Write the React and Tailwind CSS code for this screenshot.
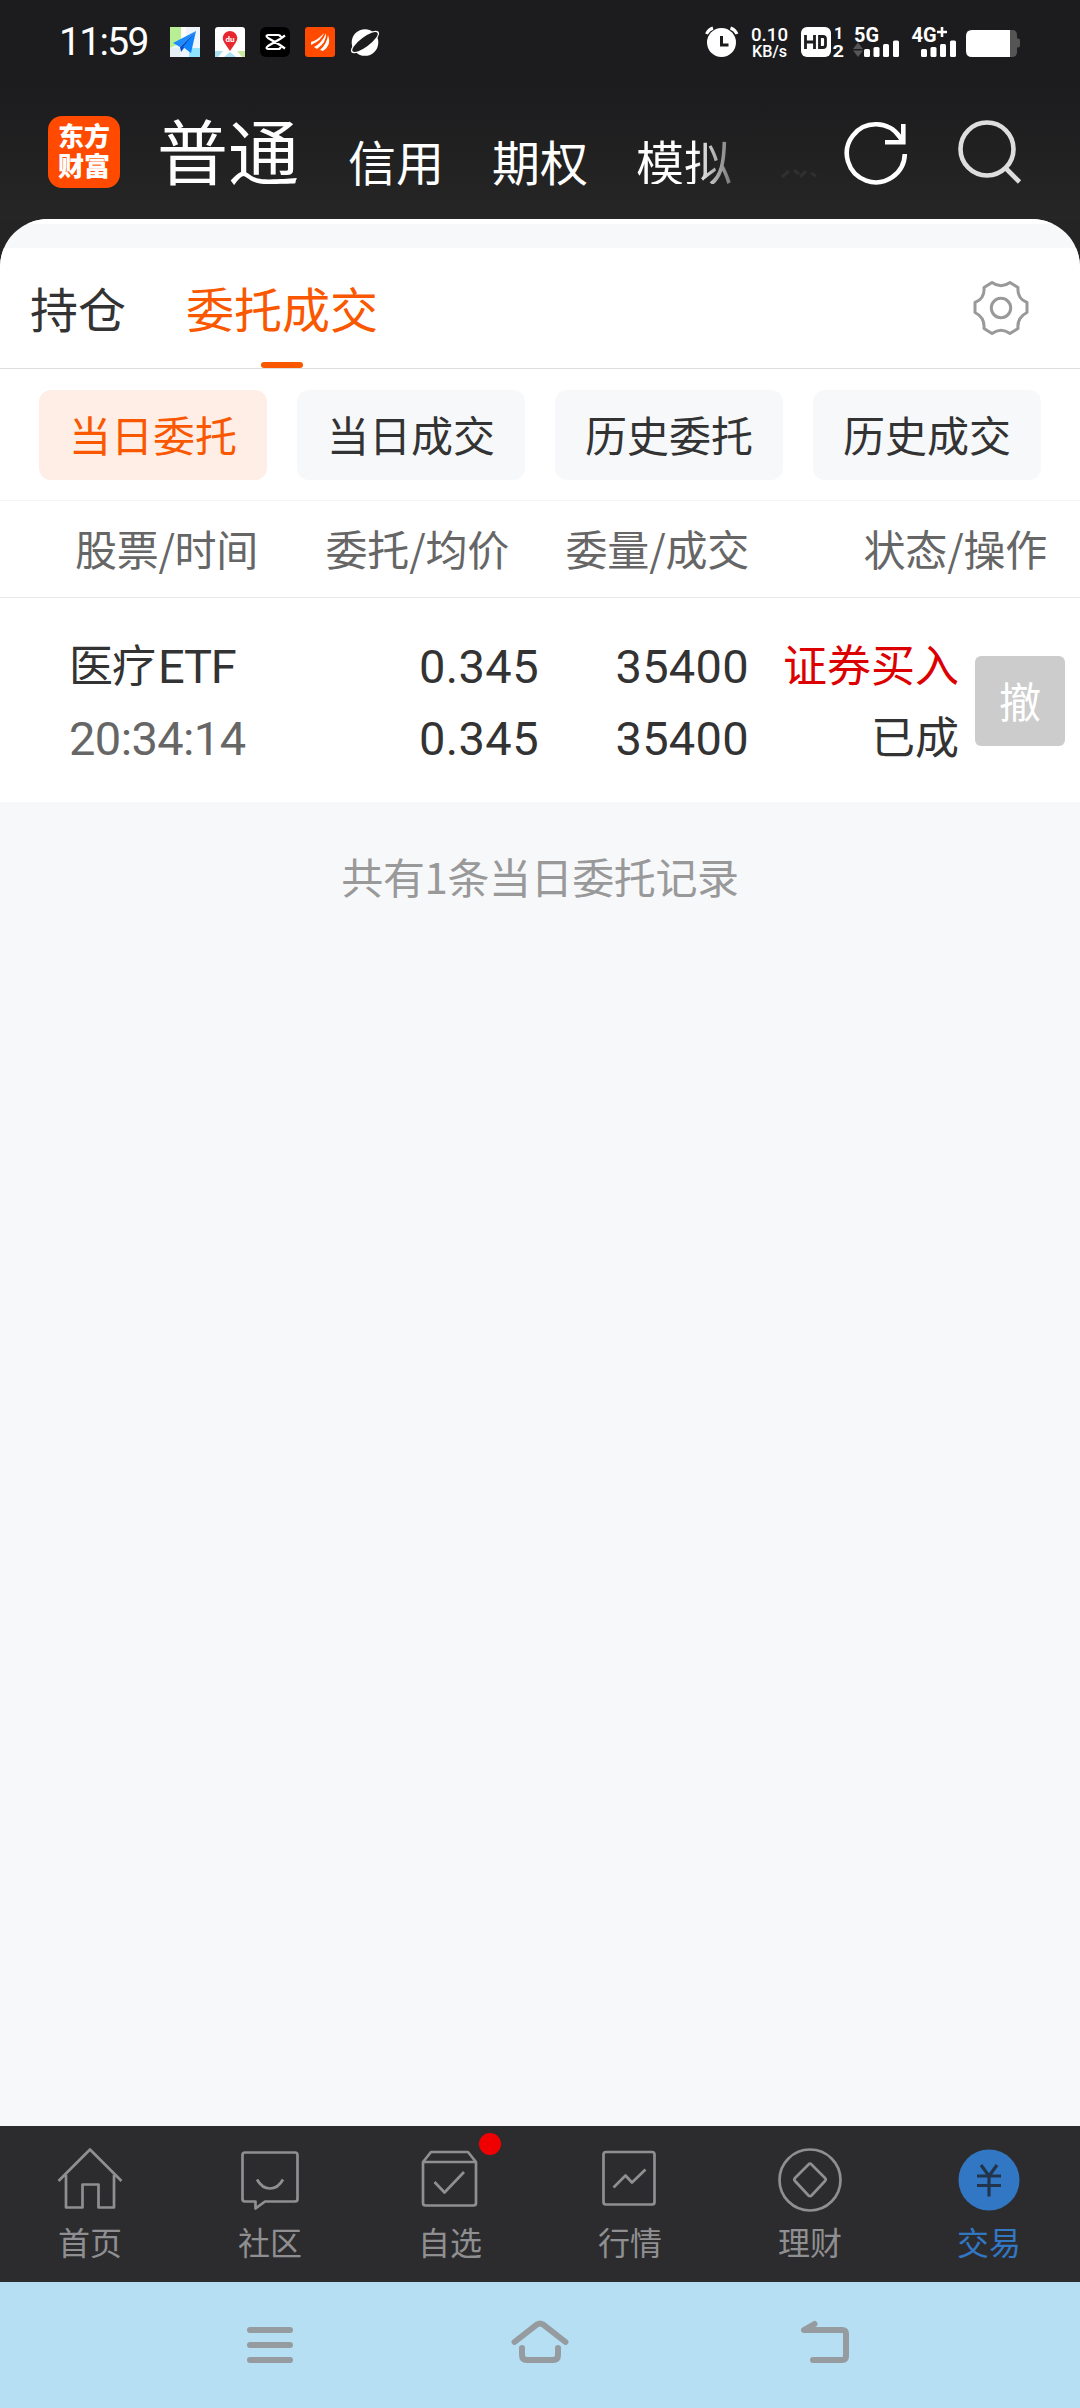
import React from "react";

const CJK = "font-['Noto_Sans_CJK_SC',sans-serif]";
const NUM = "font-[Roboto,'Noto_Sans_CJK_SC',sans-serif]";

function NotificationIcons() {
  return (
    <div className="flex gap-[15px]">
      <svg width="30" height="30" viewBox="0 0 30 30">
        <rect width="30" height="30" fill="#eef6fb" />
        <path d="M0 0h11v16L0 21z" fill="#b9ef94" />
        <path d="M11 0h5v14l-5 3z" fill="#fff" />
        <path d="M19 30V21h11v9z" fill="#8fe3fb" />
        <path d="M0 21h10v9H0z" fill="#e4eef3" />
        <path d="M26 4 3 16l7 4z" fill="#1c8cff" />
        <path d="M26 4 10 20l1 5 3-4z" fill="#0a4fc4" />
        <path d="M26 4 13 20l8 6z" fill="#0f83fb" />
      </svg>
      <svg width="30" height="30" viewBox="0 0 30 30">
        <rect width="30" height="30" rx="3" fill="#fff" />
        <path d="M0 24h8l-5 6H0z" fill="#a8e0f4" />
        <path d="M9 30l6-5 6 5z" fill="#a8e0f4" />
        <path d="M22 24h8v6h-3z" fill="#c9eaa0" />
        <path d="M15 24 9.500 16A7.300 7.300 0 1 1 20.500 16z" fill="#e8262d" />
        <text x="15" y="14.500" textAnchor="middle" fontSize="8" fontWeight="700" fill="#fff" fontFamily="Roboto, sans-serif">du</text>
      </svg>
      <svg width="30" height="30" viewBox="0 0 30 30">
        <rect width="30" height="30" rx="6" fill="#000" />
        <path d="M25 8.500 20 12 8 19q-3 2.500 0 3h10q2.500 0 2.500-2M25 21.500 20 18 8 11q-3-2.500 0-3h10q2.500 0 2.500 2" fill="none" stroke="#fff" strokeWidth="2.200" />
      </svg>
      <svg width="30" height="30" viewBox="0 0 30 30">
        <rect width="30" height="30" rx="3" fill="#ff4a00" />
        <path d="M6 15q7-2 13-9-2 7-13 12zM9 20q8-4 12-14 1 9-9 16zM15 23q7-6 8-15 4 10-5 16z" fill="#fff" />
      </svg>
      <svg className="overflow-visible" width="30" height="30" viewBox="0 0 30 30">
        <circle cx="15" cy="15.500" r="13.300" fill="#fff" />
        <ellipse cx="15" cy="15" rx="17" ry="6" transform="rotate(-37 15 15)" fill="#fff" />
        <ellipse cx="15" cy="15" rx="15.500" ry="4.800" transform="rotate(-37 15 15)" fill="#1c1c1e" />
      </svg>
    </div>
  );
}

function SystemIndicators() {
  return (
    <svg width="324" height="40" viewBox="700 22 324 40" fontFamily="Roboto, sans-serif" fill="#fff">
      <circle cx="721.500" cy="42.500" r="14.500" />
      <path d="M706.500 34q2-4.500 6.500-6M737 34q-2-4.500-6.500-6" fill="none" stroke="#fff" strokeWidth="3" />
      <path d="M721.500 36v9h7" fill="none" stroke="#1c1c1e" strokeWidth="3" />
      <text x="751" y="41" fontSize="18.500" fontWeight="500" textLength="37" lengthAdjust="spacingAndGlyphs">0.10</text>
      <text x="752" y="57" fontSize="16" fontWeight="500" textLength="35" lengthAdjust="spacingAndGlyphs">KB/s</text>
      <rect x="801" y="27" width="30" height="30" rx="6" />
      <path d="M805.500 35v14M814.500 35v14M805.500 42h9M819.500 36.500h3.500q2.500 0 2.500 2.500v6q0 2.500-2.500 2.500h-3.500z" fill="none" stroke="#1c1c1e" strokeWidth="2.800" />
      <text x="834" y="38.500" fontSize="16" fontWeight="700">1</text>
      <text x="832.500" y="57" fontSize="17" fontWeight="700" textLength="11.500" lengthAdjust="spacingAndGlyphs">2</text>
      <text x="854" y="41.500" fontSize="20" fontWeight="700" textLength="25" lengthAdjust="spacingAndGlyphs">5G</text>
      <path d="m858 42.500 5 6.500h-10zM858 57l5-6.500h-10z" fill="#555" />
      <rect x="864" y="49" width="6" height="8" rx="1.500" />
      <rect x="873.500" y="47" width="6" height="10" rx="1.500" />
      <rect x="883" y="44" width="6" height="13" rx="1.500" />
      <rect x="893" y="40.500" width="6" height="16.500" rx="1.500" />
      <text x="911.500" y="41.500" fontSize="20" fontWeight="700" textLength="25" lengthAdjust="spacingAndGlyphs">4G</text>
      <path d="M937 32h10M942 27v10" stroke="#fff" strokeWidth="2.600" />
      <rect x="921" y="49" width="6" height="8" rx="1.500" />
      <rect x="930.500" y="47" width="6" height="10" rx="1.500" />
      <rect x="940" y="44" width="6" height="13" rx="1.500" />
      <rect x="950" y="40.500" width="6" height="16.500" rx="1.500" />
      <path d="M1009 30h3q5 0 5 5v3.500h1q2 0 2 2v5q0 2-2 2h-1V52q0 5-5 5h-3z" fill="#555" />
      <path d="M972 30h38v27h-38q-6 0-6-6V36q0-6 6-6z" />
    </svg>
  );
}

function StatusBar() {
  return (
    <div className="flex h-[84px] items-center justify-between pr-14 pl-[59px]">
      <div className="flex items-center">
        <span className="w-[111px] pt-px font-[Roboto,sans-serif] text-[39px] leading-none tracking-[-1.700px] text-white">11:59</span>
        <NotificationIcons />
      </div>
      <SystemIndicators />
    </div>
  );
}

function Header() {
  return (
    <header className={`flex h-[135px] items-center pl-12 text-white ${CJK}`}>
      <div className="grid size-[72px] place-content-center rounded-[14px] bg-[#ff4a00] pb-1 text-center text-[26px] leading-[30px] font-black">
        <span>
          东方
          <br />
          财富
        </span>
      </div>
      <h1 className="ml-[37px] w-[191px] pb-[7px] text-[71px] leading-[72px]">普通</h1>
      <nav className="flex w-[496px] gap-12 pt-[17px] text-[48px] leading-[48px]">
        <span>信用</span>
        <span>期权</span>
        <span className="bg-gradient-to-r from-white from-60% to-[#777] bg-clip-text text-transparent">模拟</span>
        <svg className="mt-[32px]" width="38" height="12" viewBox="0 0 38 12" fill="none" stroke="#303032" strokeWidth="3">
          <path d="m2 9 7-6M14 2l5 4M20 9l6-6M31 5l5 3" />
        </svg>
      </nav>
      <svg className="-ml-px shrink-0" width="66" height="72" viewBox="843 115 66 72" fill="none" stroke="#fff" strokeWidth="4.600">
        <path d="M904.800 153a29 29 0 1 1-5-17l3 4.500" />
        <path d="M903.300 123v18.200H885" />
      </svg>
      <svg className="ml-[46px] shrink-0" width="72" height="72" viewBox="955 115 72 72" fill="none" stroke="#dedede" strokeWidth="4.600">
        <circle cx="987" cy="148" r="26.500" />
        <path d="m1005.500 167 14 14" />
      </svg>
    </header>
  );
}

function GearIcon() {
  return (
    <svg width="58" height="58" viewBox="-29 -29 58 58" fill="none" stroke="#999" strokeWidth="3">
      <path d="M-9 -25.500Q0 -19 9 -25.500L17 -20.500Q16 -9.500 26 -5.500V4.500Q16 9.500 17 20.500L9 25.500Q0 19 -9 25.500L-17 20.500Q-16 9.500 -26 4.500V-5.500Q-16 -9.500 -17 -20.500Z" strokeLinejoin="round" />
      <circle r="9.700" />
    </svg>
  );
}

function Tabs() {
  return (
    <div className="flex h-[121px] items-stretch border-b border-[#dedede] pl-[30px] text-[48px] leading-[119px] text-[#333]">
      <span>持仓</span>
      <div className="ml-[60px] flex flex-col items-center text-[#fa5800]">
        <span className="h-[114px]">委托成交</span>
        <i className="h-[6px] w-[42px] rounded-full bg-[#fa5800]" />
      </div>
      <div className="ml-auto flex items-center pr-[50px]">
        <GearIcon />
      </div>
    </div>
  );
}

const filters = ["当日委托", "当日成交", "历史委托", "历史成交"];

function Filters() {
  return (
    <div className="grid h-[132px] grid-cols-[repeat(4,228px)] gap-[30px] border-b border-[#f5f5f5] px-[39px] pt-[21px] text-center text-[42px] leading-[88px]">
      {filters.map((f, i) => (
        <button key={f} className={i === 0 ? "h-[90px] rounded-xl bg-[#ffeee6] pb-[2px] text-[#fa5800]" : "h-[90px] rounded-xl bg-[#f7f8fa] pb-[2px] text-[#333]"}>
          {f}
        </button>
      ))}
    </div>
  );
}

function OrderTable() {
  return (
    <div>
      <div className="flex h-[97px] border-b border-[#e8e8e8] pl-[75px] text-[42px] leading-[94px] text-[#666]">
        <span className="w-[195px] tracking-[-0.300px]">股票/时间</span>
        <span className="w-[239px] text-right tracking-[-0.200px]">委托/均价</span>
        <span className="w-[240px] text-right tracking-[-0.200px]">委量/成交</span>
        <span className="w-[298px] text-right tracking-[-0.200px]">状态/操作</span>
      </div>
      <div className={`flex h-[204px] pt-[33px] pl-[69px] text-[47px] leading-[72px] text-[#333] ${NUM}`}>
        <div className="w-[231px]">
          <div className="flex h-[72px]">
            <span className="text-[44px] tracking-[-1px]">医疗</span>
            <span className="ml-[3px] tracking-[-1.200px]">ETF</span>
          </div>
          <div className="tracking-[-0.600px] text-[#666]">20:34:14</div>
        </div>
        <div className="w-[239px] text-right tracking-[0.400px]">
          <div>0.345</div>
          <div>0.345</div>
        </div>
        <div className="w-[210px] text-right tracking-[0.300px]">
          <div>35400</div>
          <div>35400</div>
        </div>
        <div className="w-[210px] text-right text-[44px]">
          <div className="text-[#dc0000]">证券买入</div>
          <div>已成</div>
        </div>
        <button className={`mt-[25px] ml-[16px] size-[90px] rounded-md bg-[#ccc] pb-1 text-[42px] leading-[88px] text-white ${CJK}`}>撤</button>
      </div>
    </div>
  );
}

const navItems = [
  { label: "首页", icon: <path d="M-31.500-1 0-32.500 31.500-1M-24-7v32.500h16.500V2.500H8.500v23H24V-7" /> },
  { label: "社区", icon: <><path d="M-25-29.500h50q2.500 0 2.500 2.500v44q0 2.500-2.500 2.500H-5L-14.500 26.500V19.500H-25q-2.500 0-2.500-2.500v-44q0-2.500 2.500-2.500z" /><path d="M-13-2.500Q-8 6.500 0 6.500T13-2.500" /></> },
  { label: "自选", icon: <><path d="M-27-20l8-10h37l8 10v41q0 2.500-2.500 2.500h-48q-2.500 0-2.500-2.500zM-27-20h53" /><path d="m-15.500 0 10 10.500L14-10" /></> },
  { label: "行情", icon: <><rect x="-26.500" y="-30" width="51" height="52.500" rx="2.500" /><path d="M-16.500 5.500-4.500-6.500 2 .5 15.500-12.500" /></> },
  { label: "理财", icon: <><circle cy="-2" r="30.500" /><path d="M-1.500-17.500q1.500-1.500 3 0L15-4q1.500 1.500 0 3L1.500 13.500q-1.500 1.500-3 0L-15-1q-1.500-1.500 0-3z" /></> },
  { label: "交易", icon: <><circle cx="-1" cy="-2" r="30.500" fill="#3177c4" stroke="none" /><path d="M-9-17-1-6 7-17M-13-6h24M-13 3.500h24M-1-6v20.500" stroke="#22354c" strokeWidth="3.200" /></> },
];

function BottomNav() {
  return (
    <nav className="grid h-[156px] grid-cols-6 bg-[#2c2c2e] text-[#8f8f92]">
      {navItems.map((n, i) => (
        <div key={n.label} className="relative flex flex-col items-center pt-5">
          <svg width="72" height="72" viewBox="-36 -36 72 72" fill="none" stroke="currentColor" strokeWidth="2.700" strokeLinejoin="round">
            {n.icon}
          </svg>
          <span className={i === 5 ? "pr-[2px] text-[32px] leading-[46px] text-[#3177c4]" : "text-[32px] leading-[46px]"}>{n.label}</span>
          {i === 2 && <i className="absolute top-[7px] left-[119px] size-[22px] rounded-full bg-[#f00000]" />}
        </div>
      ))}
    </nav>
  );
}

function SystemNav() {
  return (
    <div className="flex h-[126px] items-center bg-[#b6dff4] pl-[240px] text-[#959b9f]">
      <svg width="60" height="60" viewBox="240 2315 60 60" fill="none" stroke="currentColor" strokeWidth="6" strokeLinecap="round">
        <path d="M250 2330h40M250 2345h40M250 2360h40" />
      </svg>
      <svg className="ml-[206px]" width="68" height="60" viewBox="506 2315 68 60" fill="none" stroke="currentColor" strokeWidth="6" strokeLinecap="round">
        <path d="M514.500 2342 537 2324.500q3-2 6 0L565.500 2342M522 2348v7q0 5 5 5h26q5 0 5-5v-7" />
      </svg>
      <svg className="ml-[222px]" width="60" height="60" viewBox="796 2315 60 60" fill="none" stroke="currentColor" strokeWidth="6" strokeLinecap="round" strokeLinejoin="round">
        <path d="m814.500 2324-10.500 6h38q4 0 4 4v22q0 4-4 4h-29" />
      </svg>
    </div>
  );
}

export default function App() {
  return (
    <div className="flex h-[2408px] w-[1080px] flex-col overflow-hidden bg-[#242425] font-['Noto_Sans_CJK_SC',sans-serif]">
      <div className="bg-gradient-to-b from-[#1c1c1e] from-40% to-[#262626]">
        <StatusBar />
        <Header />
      </div>
      <main className="flex flex-1 flex-col overflow-hidden rounded-t-[48px] bg-[#f7f8fa]">
        <div className="h-[29px] border-t-[5px] border-white" />
        <section className="bg-white">
          <Tabs />
          <Filters />
          <OrderTable />
        </section>
        <p className="mt-[49px] text-center text-[42px] leading-[50px] tracking-[-0.400px] text-[#999]">共有1条当日委托记录</p>
      </main>
      <BottomNav />
      <SystemNav />
    </div>
  );
}
